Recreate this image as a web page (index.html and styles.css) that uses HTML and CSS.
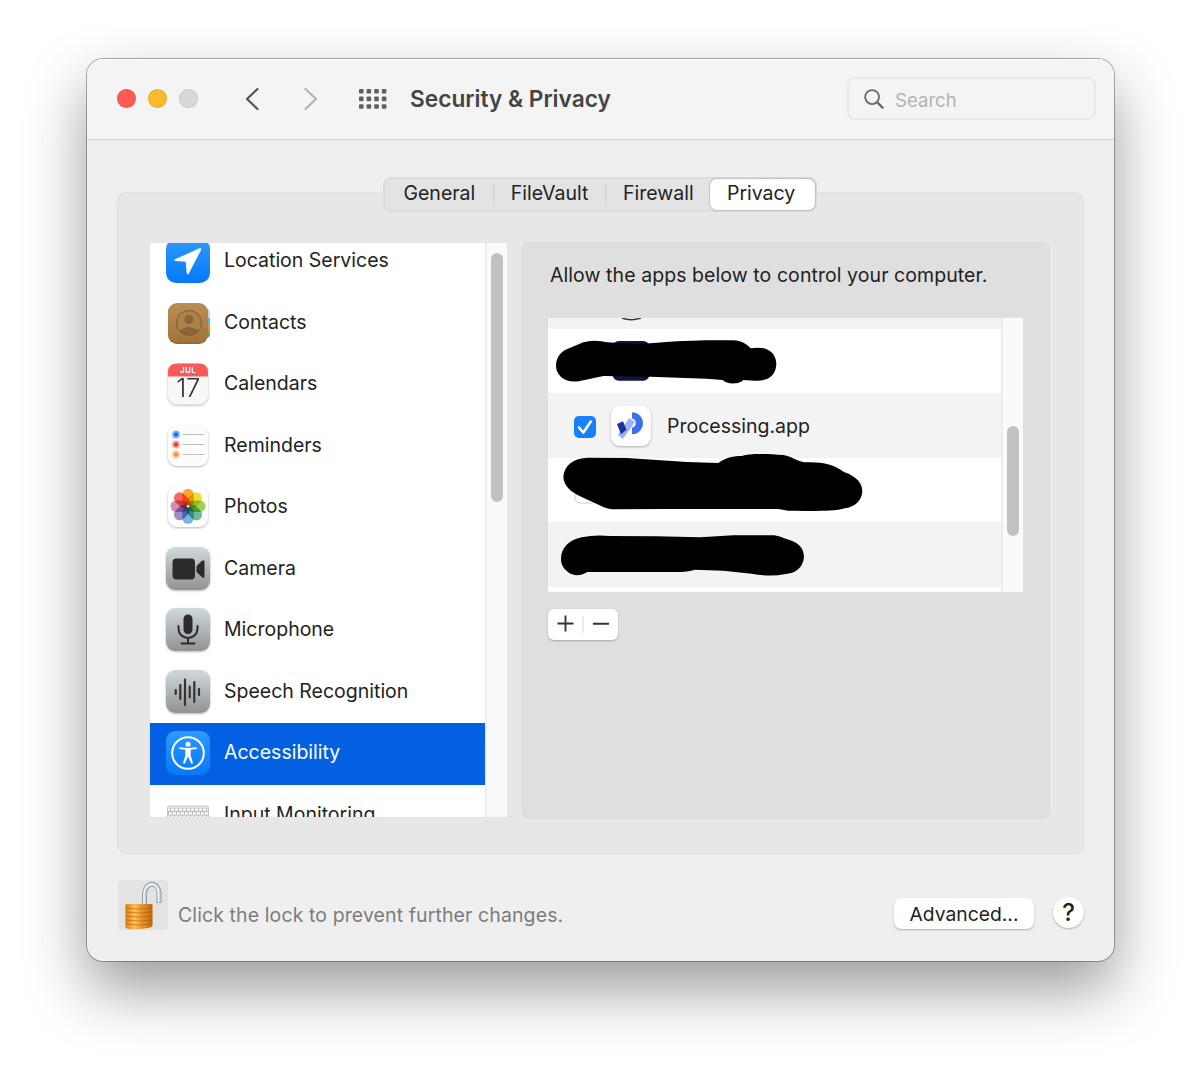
FILE: index.html
```
<!DOCTYPE html>
<html lang="en">
<head>
<meta charset="utf-8">
<title>Security &amp; Privacy</title>
<link rel="stylesheet" href="styles.css">
</head>
<body>
<main class="window">
  <header class="titlebar">
    <div class="lights"><i class="light red"></i><i class="light yellow"></i><i class="light gray"></i></div>
    <nav class="nav">
      <svg width="14" height="24" viewBox="0 0 14 24"><path d="M12.500 2 2 12l10.500 10" fill="none" stroke="#555" stroke-width="2.200" stroke-linecap="round" stroke-linejoin="round"/></svg>
      <svg width="14" height="24" viewBox="0 0 14 24"><path d="M1.500 2 12 12 1.500 22" fill="none" stroke="#b4b4b4" stroke-width="2.200" stroke-linecap="round" stroke-linejoin="round"/></svg>
    </nav>
    <svg class="grid-icon" width="28" height="20" viewBox="0 0 28 20" fill="#5f5f5f">
      <g id="dots"><rect width="4.600" height="4.600" rx="1"/><rect x="7.600" width="4.600" height="4.600" rx="1"/><rect x="15.200" width="4.600" height="4.600" rx="1"/><rect x="22.800" width="4.600" height="4.600" rx="1"/></g>
      <use href="#dots" y="7.600"/><use href="#dots" y="15.200"/>
    </svg>
    <h1 class="title">Security &amp; Privacy</h1>
    <div class="search">
      <svg width="20" height="20" viewBox="0 0 21 21" fill="none" stroke="#6b6b6b"><circle cx="8.500" cy="8.500" r="7.300" stroke-width="1.900"/><path d="m14 14 5.500 5.500" stroke-width="2.500" stroke-linecap="round"/></svg>
      <span>Search</span>
    </div>
  </header>

  <section class="content">
    <div class="tabs">
      <span class="tab general">General</span><span class="tab vault">FileVault</span><span class="tab firewall">Firewall</span><span class="tab active">Privacy</span>
    </div>
    <div class="group">
      <div class="services">
        <ul class="rows">
          <li class="row">
            <svg class="icon" viewBox="0 0 44 44"><defs><linearGradient id="blue" x2="0" y2="1"><stop stop-color="#2b9bff"/><stop offset="1" stop-color="#0877f9"/></linearGradient></defs><rect width="44" height="44" rx="10" fill="url(#blue)"/><path d="M33.500 9.200 9.500 20.100q-2.600 1.400.4 1.900l9.800.7.900 10.800q.6 3.800 2.500.5L35 11q.7-2.400-1.500-1.800Z" fill="#fff"/></svg>
            <span>Location Services</span></li>
          <li class="row">
            <svg class="icon" viewBox="0 0 44 44"><defs><linearGradient id="brown" x2="0" y2="1"><stop stop-color="#b98d55"/><stop offset="1" stop-color="#a0743b"/></linearGradient></defs><path d="M38 7q6.500 1 6.500 5v5h-6.500Z" fill="#ccd5d4"/><path d="M38 17h6.500v7h-6.500Z" fill="#55bbe4"/><path d="M38 24h6.500v6h-6.500Z" fill="#f18b24"/><path d="M38 30h6.500v3q0 4-6.500 4Z" fill="#4cb95b"/><rect x="2" y="3" width="40" height="40" rx="9" fill="#8e6939"/><rect x="2" y="2" width="40" height="39.500" rx="9" fill="url(#brown)"/><circle cx="23" cy="22" r="12.500" fill="#ad824a" stroke="#7f5b30"/><circle cx="23" cy="18.500" r="4.500" fill="#8a6436"/><path d="M13.500 29.500q9.500-7 19 0a12 12 0 0 1-19 0" fill="#8a6436"/></svg>
            <span>Contacts</span></li>
          <li class="row">
            <svg class="icon lifted" viewBox="0 0 44 44"><rect x="2" y="1.500" width="40" height="41" rx="9" fill="#f8f8f8"/><path d="M2 14.500v-4q0-9 9-9h22q9 0 9 9v4Z" fill="#f75a58"/><text class="month" x="22" y="11">JUL</text><text class="day" x="22" y="35">17</text></svg>
            <span>Calendars</span></li>
          <li class="row">
            <svg class="icon lifted" viewBox="0 0 44 44"><rect x="2" y="2" width="40" height="40" rx="9" fill="#fcfcfc"/><path d="M17 10.500h21M17 20.500h21M17 30.500h21" stroke="#bbb"/><g stroke-width="2"><circle cx="10" cy="10.500" r="2.900" fill="#1267e4" stroke="#79b5fc"/><circle cx="10" cy="20.500" r="2.900" fill="#e33232" stroke="#f8a09c"/><circle cx="10" cy="30.500" r="2.900" fill="#ef8f31" stroke="#fbc98f"/></g></svg>
            <span>Reminders</span></li>
          <li class="row">
            <svg class="icon lifted" viewBox="0 0 44 44"><rect x="2" y="2" width="40" height="40" rx="9" fill="#fff"/><g class="petals"><rect x="16.300" y="3.800" width="11.400" height="17.500" rx="5.700" fill="#ff9d16"/><rect x="16.300" y="3.800" width="11.400" height="17.500" rx="5.700" fill="#e6df1a" transform="rotate(45 22 21.300)"/><rect x="16.300" y="3.800" width="11.400" height="17.500" rx="5.700" fill="#9acb45" transform="rotate(90 22 21.300)"/><rect x="16.300" y="3.800" width="11.400" height="17.500" rx="5.700" fill="#5cb68b" transform="rotate(135 22 21.300)"/><rect x="16.300" y="3.800" width="11.400" height="17.500" rx="5.700" fill="#65aee4" transform="rotate(180 22 21.300)"/><rect x="16.300" y="3.800" width="11.400" height="17.500" rx="5.700" fill="#987fc3" transform="rotate(225 22 21.300)"/><rect x="16.300" y="3.800" width="11.400" height="17.500" rx="5.700" fill="#cb82b1" transform="rotate(270 22 21.300)"/><rect x="16.300" y="3.800" width="11.400" height="17.500" rx="5.700" fill="#f4574c" transform="rotate(315 22 21.300)"/></g><circle cx="22" cy="21.300" r="1.300" fill="#fff"/></svg>
            <span>Photos</span></li>
          <li class="row">
            <svg class="icon lifted" viewBox="0 0 44 44"><defs><linearGradient id="steel" x2="0" y2="1"><stop stop-color="#d0d9dd"/><stop offset="1" stop-color="#929292"/></linearGradient></defs><rect width="44" height="43" rx="9.500" fill="url(#steel)"/><rect x="6.500" y="11.500" width="22.500" height="21" rx="4" fill="#2b2b2b"/><path d="m30.500 19 5.500-5.200q2.500-1.500 2.500 1v14.400q0 2.500-2.500 1l-5.500-5.200Z" fill="#2b2b2b"/></svg>
            <span>Camera</span></li>
          <li class="row">
            <svg class="icon lifted" viewBox="0 0 44 44"><rect width="44" height="43" rx="9.500" fill="url(#steel)"/><rect x="17.500" y="6.500" width="9" height="19.500" rx="4.500" fill="#2b2b2b"/><path d="M12.500 18v2.500a9.500 9.500 0 0 0 19 0V18M22 30v5M15.500 35.500h13" fill="none" stroke="#2b2b2b" stroke-width="2" stroke-linecap="round"/></svg>
            <span>Microphone</span></li>
          <li class="row">
            <svg class="icon lifted" viewBox="0 0 44 44"><rect width="44" height="43" rx="9.500" fill="url(#steel)"/><path d="M9.700 20v4M14.300 15v14M19 9.500v25.500M23.700 16.500v11M28.300 12v20M33 19v6" stroke="#333" stroke-width="2.200" stroke-linecap="round"/></svg>
            <span>Speech Recognition</span></li>
          <li class="row selected">
            <svg class="icon" viewBox="0 0 44 44"><rect width="44" height="44" rx="9.500" fill="url(#blue)"/><circle cx="22" cy="22" r="15.800" fill="none" stroke="#fff" stroke-width="2"/><circle cx="22" cy="13.300" r="2.500" fill="#fff"/><path d="M14 17.200q8 1.600 16 0" fill="none" stroke="#fff" stroke-width="1.800" stroke-linecap="round"/><path d="M19.300 17.500h5.400v7l2.300 7.800-1.700.5L22 25.500l-3.300 7.300-1.700-.5 2.300-7.800Z" fill="#fff"/></svg>
            <span>Accessibility</span></li>
          <li class="row">
            <svg class="icon" viewBox="0 0 44 44"><defs><pattern id="keys" width="4" height="3.600" patternUnits="userSpaceOnUse"><path d="M0 .5h4M.5 0v3.600" stroke="#b0b0b0" stroke-width=".8"/></pattern></defs><rect x="1.500" y="13" width="41" height="18" rx="1.500" fill="#f6f6f6" stroke="#c4c4c4"/><path d="M2 14.500h40v3.600H2z" fill="url(#keys)"/><path d="M0 14.500h40v3.600H0z" transform="translate(2 3.600)" fill="url(#keys)"/><path d="M2 21.700h40v3.600H2z" fill="url(#keys)"/></svg>
            <span>Input Monitoring</span></li>
        </ul>
        <div class="track side"><i class="thumb"></i></div>
      </div>

      <div class="panel">
        <p class="prompt">Allow the apps below to control your computer.</p>
        <div class="apps">
          <div class="app-list">
            <div class="app alt"></div>
            <div class="app"></div>
            <div class="app alt">
              <svg class="check" width="22" height="22" viewBox="0 0 22 22"><rect width="22" height="22" rx="5" fill="#1681fb"/><path d="m5 11.500 4.300 5L16.800 5.500" fill="none" stroke="#fff" stroke-width="2.600" stroke-linecap="round" stroke-linejoin="round"/></svg>
              <svg class="lifted" width="40" height="40" viewBox="0 0 40 40"><rect width="40" height="40" rx="9" fill="#fff"/><path d="M21 6.200a11 11 0 0 1 0 22v-6.500a4.700 4.700 0 0 0 0-9.200Z" fill="#3c70ec"/><path d="m7 29 11-17 6 4-12 17Z" fill="#9db3f4"/><path d="m6 18 6-2.700 3.500 8.500-5.500 4.500Z" fill="#1d339c"/></svg>
              <span>Processing.app</span>
            </div>
            <div class="app"></div>
            <div class="app alt"></div>
            <div class="app"></div>
          </div>
          <div class="track inner"><i class="thumb"></i></div>
          <svg class="scribbles" width="475" height="274" viewBox="0 0 475 274">
            <path d="M74 0q9 3.500 19 0" fill="none" stroke="#333" stroke-width="1.500"/>
            <rect x="27" y="164" width="21" height="21" rx="5" fill="#fff" stroke="#ccc"/>
            <g transform="translate(-8 -8) scale(.33333)">
              <rect x="218" y="93" width="110" height="119" rx="18" fill="#10153f"/>
              <path d="M48 168C48 140 65 122 84 116L130 97Q162 87 202 97Q270 104 330 100L410 94L500 91H580C604 92 620 102 632 115C690 105 709 135 709 163C707 195 688 214 645 212L610 210C600 223 560 224 548 210L500 206L330 200L190 198L120 213C75 222 48 195 48 168Z"/>
            </g>
            <g transform="translate(-8 132) scale(.33333)">
              <path d="M70 82C72 45 100 25 144 23L260 24L340 29L440 36L535 39C555 25 573 18 605 18C635 9 680 12 730 15C755 20 770 32 792 37C850 35 878 42 912 66C952 80 967 101 967 124C966 153 943 172 914 175C885 185 835 183 745 182L715 177H560L380 177L215 178C195 176 165 158 125 141C90 125 72 108 70 82Z"/>
              <path d="M63 327C63 292 88 270 125 262Q165 253 210 258L350 259L480 262L580 256H695C718 256 725 264 747 269C782 280 792 300 792 322C789 355 764 371 737 372Q690 382 635 371L550 362L465 359Q440 367 400 366H142C126 378 98 379 84 366C69 355 63 342 63 327Z"/>
            </g>
          </svg>
        </div>
        <div class="add-remove">
          <svg width="70" height="31" viewBox="0 0 70 31" stroke="#333" stroke-width="1.900"><path d="M9.500 14.500h16M17.500 6.500v16M45 14.800h16"/><path d="M35 7v17" stroke="#ddd" stroke-width="1"/></svg>
        </div>
      </div>
    </div>
  </section>

  <footer class="footer">
    <svg class="lock" width="50" height="51" viewBox="0 0 50 51">
      <defs><linearGradient id="gold"><stop stop-color="#d97d0b"/><stop offset=".35" stop-color="#ffc35a"/><stop offset=".5" stop-color="#f4a33a"/><stop offset="1" stop-color="#bd680a"/></linearGradient></defs>
      <rect width="50" height="50" rx="4" fill="#e3e3e3"/>
      <path d="M26.500 25V13.500c1-12.500 14.500-12.500 14.500.5v9" fill="none" stroke="#87979d" stroke-width="5"/><path d="M26.500 25V13.500c1-12.500 14.500-12.500 14.500.5v8.300" fill="none" stroke="#c2d0d4" stroke-width="3.400"/><path d="M26 25V13.500c1-12.500 14.500-12.500 14.500.5v8.300" fill="none" stroke="#f4f9fa" stroke-width="1.400"/>
      <path d="M7.500 25q0-1 2-1h23q2 0 2 1v20.500q0 1.500-3 2.200-8 2-20 1.300-4-.3-4-2Z" fill="url(#gold)"/>
      <path d="m7.500 28 13 1 14-1M7.500 32l13 1 14-1M7.500 36l13 1 14-1M7.500 40l13 1 14-1M7.500 44l13 1 14-1" fill="none" stroke="#a95a08" stroke-opacity=".55"/>
    </svg>
    <span class="lock-note">Click the lock to prevent further changes.</span>
    <button class="advanced">Advanced...</button>
    <button class="help">?</button>
  </footer>
</main>
</body>
</html>
```
FILE: styles.css
```
* { box-sizing: border-box; }
body { margin: 0; height: 1075px; overflow: hidden; padding: 59px 86px 0 87px; background: #fff; color: #222; font: 20px/24px Inter, "Liberation Sans", sans-serif; }
svg { display: block; flex: none; }
button { border: 0; padding: 0; font: inherit; color: inherit; background: #fff; }
.window { height: 902px; display: flex; flex-direction: column; background: #efefef; border-radius: 16px; overflow: hidden; box-shadow: 0 0 0 1px rgba(0,0,0,.3), 0 28px 62px rgba(0,0,0,.4); }
.titlebar { height: 81px; flex: none; display: flex; align-items: center; padding: 0 18px 2px 30px; background: #f4f4f4; border-bottom: 1px solid #d2d2d2; border-top: 1px solid #fff; }
.lights { display: flex; gap: 12px; }
.light { width: 19px; height: 19px; border-radius: 50%; border: 1px solid rgba(0,0,0,.08); }
.red { background: #fe5b54; }
.yellow { background: #fdb92b; }
.gray { background: #d8d8d8; }
.nav { display: flex; gap: 45px; margin-left: 47px; }
.grid-icon { margin-left: 41px; }
.title { margin: 0 auto 0 23px; color: #444; font-size: 22.700px; font-weight: 600; letter-spacing: 0; }
.search { width: 249px; height: 43px; display: flex; align-items: center; gap: 11px; padding: 0 0 0 15px; border: 2px solid #e8e8e8; border-radius: 8px; color: #b3b3b3; font-size: 18.600px; }
.search span { padding-top: 3px; }
.content { display: flex; flex-direction: column; padding: 37px 30px 0; }
.tabs { position: relative; width: 434px; height: 35px; margin: 0 auto -20px 266px; display: flex; align-items: center; border: 2px solid #dcdcdc; border-radius: 8px; background: #e3e3e3; color: #222; }
.tab { height: 21px; line-height: 19px; text-align: center; font-size: 19.500px; }
.general { width: 109px; border-right: 1px solid #cfcfcf; padding-left: 1px; }
.vault { width: 113px; border-right: 1px solid #cfcfcf; }
.firewall { width: 104px; }
.active { width: 105px; height: 31px; line-height: 29px; padding-right: 3px; border-radius: 7px; background: #fff; box-shadow: 0 0 1px 1px rgba(0,0,0,.14); }
.group { height: 662px; display: flex; gap: 14px; padding: 49px 32px 35px 31px; background: #e7e7e7; border: 1px solid #e0e0e0; border-radius: 9px; }
.services { width: 359px; height: 576px; display: flex; overflow: hidden; background: #fff; border: 1px solid #e4e4e4; }
.rows { width: 335px; margin: -12px 0 0; padding: 0; list-style: none; }
.row { height: 61.500px; display: flex; align-items: center; gap: 14px; padding-left: 16px; font-size: 19.500px; }
.row span { margin-top: -3px; }
.icon { width: 44px; height: 44px; margin-top: -1px; }
.lifted { filter: drop-shadow(0 1px 1px rgba(0,0,0,.28)); }
.selected { background: #0360e3; color: #fff; }
.month { font: 700 7.800px Inter, sans-serif; fill: #fff; text-anchor: middle; letter-spacing: .5px; }
.day { font: 300 25.500px Inter, sans-serif; fill: #333; text-anchor: middle; letter-spacing: -.3px; }
.petals rect { mix-blend-mode: multiply; opacity: .9; }
.track { flex: none; background: #fafafa; border-left: 2px solid #ececec; }
.thumb { display: block; width: 12px; border-radius: 6px; background: #c1c1c1; }
.side { width: 22px; padding: 10px 0 0 4px; }
.side .thumb { height: 249px; }
.panel { width: 528px; height: 577px; padding: 20px 25px; background: #dfdfdf; border: 1px solid #dadada; border-radius: 7px; }
.prompt { margin: 0 0 31px 2px; white-space: nowrap; font-size: 19.500px; letter-spacing: .07px; }
.apps { position: relative; display: flex; width: 475px; height: 274px; overflow: hidden; background: #fff; }
.app-list { width: 453px; margin-top: -54px; }
.app { height: 64.500px; display: flex; align-items: center; padding-left: 26px; font-size: 19.500px; }
.app .lifted { margin: 1px 16px 0 15px; }
.check { margin-top: 3px; }
.app span { padding-top: 1px; }
.alt { background: #f3f3f3; }
.inner { width: 22px; padding: 108px 0 0 4px; }
.inner .thumb { height: 110px; }
.scribbles { position: absolute; left: 0; top: 0; }
.add-remove { width: 70px; height: 31px; margin-top: 17px; border-radius: 6px; background: #fff; box-shadow: 0 1px 2px rgba(0,0,0,.25); }
.footer { display: flex; align-items: center; padding: 26px 30px 0 31px; }
.lock-note { margin: 18px auto 0 10px; color: #7c7c7c; font-size: 19.500px; letter-spacing: .1px; }
.advanced { width: 140px; height: 31px; margin: 16px 19px 0 0; border-radius: 7px; font-size: 19.300px; line-height: 30px; box-shadow: 0 1px 2px rgba(0,0,0,.28); }
.help { width: 31px; height: 31px; margin-top: 14px; border-radius: 50%; font-size: 24px; font-weight: 500; line-height: 32px; box-shadow: 0 1px 2px rgba(0,0,0,.28); }
```
